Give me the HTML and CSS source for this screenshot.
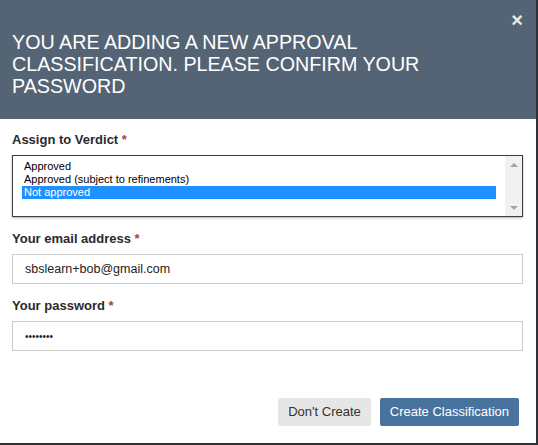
FILE: index.html
```html
<!DOCTYPE html>
<html>
<head>
<meta charset="utf-8">
<link rel="stylesheet" href="styles.css">
</head>
<body>
<div class="modal">
  <div class="modal-header">
    <h1 class="modal-title">YOU ARE ADDING A NEW APPROVAL CLASSIFICATION. PLEASE CONFIRM YOUR PASSWORD</h1>
    <span class="close">&times;</span>
  </div>
  <div class="modal-body">
    <div class="group">
      <label class="label">Assign to Verdict <span class="req">*</span></label>
      <div class="listbox">
        <div class="options">
          <div class="option">Approved</div>
          <div class="option">Approved (subject to refinements)</div>
          <div class="option selected">Not approved</div>
        </div>
        <div class="scrollbar">
          <span class="arrow up"></span>
          <span class="arrow down"></span>
        </div>
      </div>
    </div>
    <div class="group">
      <label class="label">Your email address <span class="req">*</span></label>
      <input class="input" type="text" value="sbslearn+bob@gmail.com">
    </div>
    <div class="group">
      <label class="label">Your password <span class="req">*</span></label>
      <input class="input input-pass" type="password" value="password">
    </div>
  </div>
  <div class="modal-footer">
    <button class="btn btn-default">Don't Create</button>
    <button class="btn btn-primary">Create Classification</button>
  </div>
</div>
</body>
</html>
```

FILE: styles.css
```css
html, body {
  margin: 0;
  padding: 0;
}
body {
  background: #2f3237;
  font-family: "Liberation Sans", Arial, sans-serif;
  width: 538px;
  height: 445px;
  overflow: hidden;
}
.modal {
  width: 536px;
  height: 443px;
  background: #ffffff;
  display: flex;
  flex-direction: column;
}
.modal-header {
  position: relative;
  box-sizing: border-box;
  height: 119px;
  background: #546475;
  padding: 31px 60px 0 12px;
}
.modal-title {
  margin: 0;
  font-size: 19.7px;
  line-height: 22px;
  font-weight: normal;
  color: #ffffff;
}
.close {
  position: absolute;
  top: 10px;
  right: 13px;
  font-size: 20px;
  line-height: 20px;
  font-weight: bold;
  color: #e6eaef;
}
.modal-body {
  padding: 12px 13px 0 12px;
}
.group {
  margin-bottom: 13px;
}
.label {
  display: block;
  font-size: 13px;
  line-height: 18px;
  font-weight: bold;
  color: #2a2a2a;
  margin-bottom: 6px;
}
.req {
  color: #a94442;
}
.listbox {
  box-sizing: border-box;
  height: 62px;
  border: 1px solid #3a3f45;
  box-shadow: 0 1px 2px rgba(0, 0, 0, 0.3);
  display: flex;
  background: #fff;
}
.options {
  flex: 1;
  padding: 4px 9px;
}
.option {
  font-size: 11px;
  line-height: 13px;
  padding-left: 2px;
  color: #000;
}
.option.selected {
  background: #1e90ff;
  color: #fff;
}
.scrollbar {
  width: 17px;
  background: #f1f1f1;
  display: flex;
  flex-direction: column;
  justify-content: space-between;
  align-items: center;
  padding: 7px 0 6px;
}
.arrow {
  width: 0;
  height: 0;
  border-left: 4px solid transparent;
  border-right: 4px solid transparent;
}
.arrow.up {
  border-bottom: 4px solid #a3a3a3;
}
.arrow.down {
  border-top: 4px solid #a3a3a3;
}
.input {
  display: block;
  box-sizing: border-box;
  width: 100%;
  height: 30px;
  margin: 0;
  border: 1px solid #cccccc;
  border-radius: 0;
  padding: 0 12px;
  font-family: "Liberation Sans", Arial, sans-serif;
  font-size: 12.5px;
  color: #222;
  background: #fff;
  outline: none;
}
.input-pass {
  font-size: 10px;
  letter-spacing: 0;
}
.modal-footer {
  margin-top: auto;
  display: flex;
  justify-content: flex-end;
  gap: 9px;
  padding: 0 17px 17px;
}
.btn {
  height: 28px;
  padding: 0 10px;
  border: none;
  border-radius: 2px;
  font-family: "Liberation Sans", Arial, sans-serif;
  font-size: 13px;
  line-height: 28px;
  cursor: pointer;
}
.btn-default {
  background: #e6e6e6;
  color: #333;
}
.btn-primary {
  background: #48739e;
  color: #fff;
}
```
